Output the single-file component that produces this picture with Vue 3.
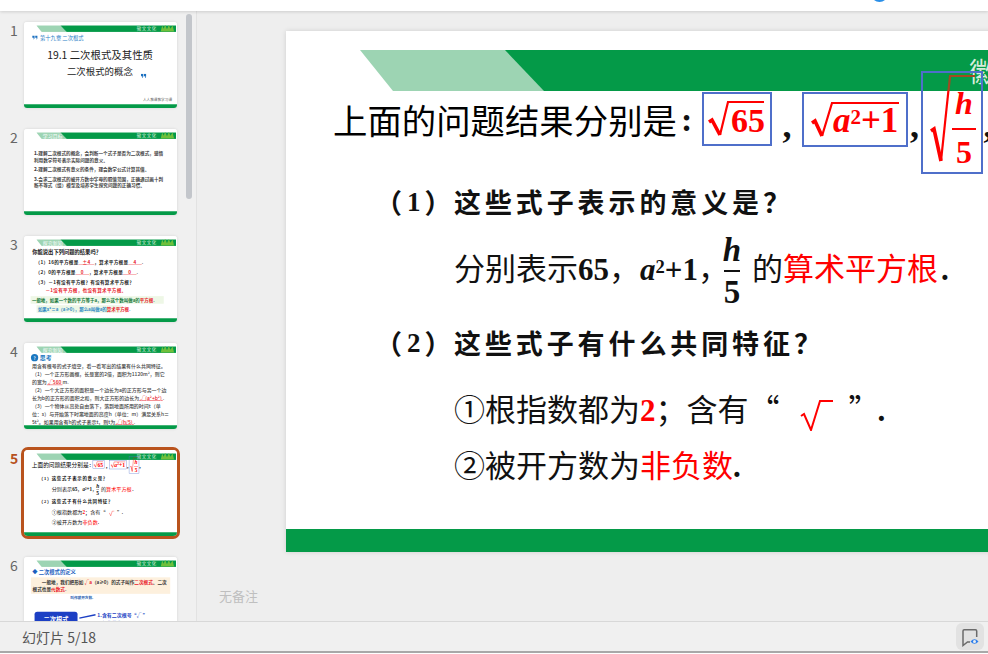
<script setup>
const line2 = [
  { n: 1, t: '理解二次根式的概念，会判断一个式子是否为二次根式，感悟利用数学符号表示实际问题的意义。' },
  { n: 2, t: '理解二次根式有意义的条件，理会数学公式计算其值。' },
  { n: 3, t: '会求二次根式的被开方数中字母的取值范围，正确通过画十判断不等式（组）模型及培养学生探究问题的正确习惯。' }
]
const line4 = [
  '用含有根号的式子填空，看一看写出的结果有什么共同特征。',
  '（1）一个正方形画框，长是宽的2倍，面积为1120m²，则它的宽为',
  '（2）一个大正方形的面积是一个边长为a的正方形与另一个边长为b的正方形的面积之和，则大正方形的边长为',
  '（3）一个物体从高处自由落下，落到地面所用的时间t（单位：s）与开始落下时离地面的高度h（单位：m）满足关系h＝5t²。如果用含有h的式子表示t，则t为'
]
</script>

<template>
  <div class="app">
    <header class="top"><i class="blue-dot"></i></header>
    <div class="body">
      <aside class="side">
        <div class="scroll-thumb"></div>

        <div class="row">
          <span class="num">1</span>
          <div class="frame">
            <div class="slide mini">
              <div class="banner"><div class="light"></div><div class="dark"><span>徽文文化</span></div></div>
              <svg class="logo" viewBox="0 0 100 50"><path d="M5 48 L15 8 L25 30 L35 2 L47 32 L60 4 L70 30 L85 8 L95 48 Z" fill="#6fbf3b"/></svg>
              <div class="s1">
                <div class="chap"><svg class="qm" viewBox="0 0 34 26"><path d="M1 0 H15 V14 Q15 22 8 26 Q10 20 9 14 H1 Z M19 0 H33 V14 Q33 22 26 26 Q28 20 27 14 H19 Z" fill="#1c70c0"/></svg>第十九章 二次根式</div>
                <div class="t1">19.1 二次根式及其性质</div>
                <div class="t2">二次根式的概念<svg class="qm q-end" viewBox="0 0 34 26"><path d="M1 0 H15 V14 Q15 22 8 26 Q10 20 9 14 H1 Z M19 0 H33 V14 Q33 22 26 26 Q28 20 27 14 H19 Z" fill="#1c70c0"/></svg></div>
              </div>
              <div class="foot-note">人人教课教学习课</div>
              <div class="footer"></div>
            </div>
          </div>
        </div>

        <div class="row">
          <span class="num">2</span>
          <div class="frame">
            <div class="slide mini">
              <div class="banner"><div class="light"><span>学习目标</span></div><div class="dark"><span>徽文文化</span></div></div>
              <svg class="logo" viewBox="0 0 100 50"><path d="M5 48 L15 8 L25 30 L35 2 L47 32 L60 4 L70 30 L85 8 L95 48 Z" fill="#6fbf3b"/></svg>
              <div class="s2">
                <p v-for="l in line2" :key="l.n"><b>{{ l.n }}.</b>{{ l.t }}</p>
              </div>
              <div class="footer"></div>
            </div>
          </div>
        </div>

        <div class="row">
          <span class="num">3</span>
          <div class="frame">
            <div class="slide mini">
              <div class="banner"><div class="light"><span>探究新知</span></div><div class="dark"><span>徽文文化</span></div></div>
              <svg class="logo" viewBox="0 0 100 50"><path d="M5 48 L15 8 L25 30 L35 2 L47 32 L60 4 L70 30 L85 8 L95 48 Z" fill="#6fbf3b"/></svg>
              <div class="s3">
                <div class="h3t">你能说出下列问题的结果吗？</div>
                <div class="q">（1）16的平方根是<u class="r">&nbsp;&nbsp;&nbsp;±4&nbsp;&nbsp;&nbsp;</u>，算术平方根是<u class="r">&nbsp;&nbsp;&nbsp;&nbsp;4&nbsp;&nbsp;&nbsp;&nbsp;</u>.</div>
                <div class="q">（2）0的平方根是<u class="r">&nbsp;&nbsp;&nbsp;&nbsp;0&nbsp;&nbsp;&nbsp;&nbsp;</u>，算术平方根是<u class="r">&nbsp;&nbsp;&nbsp;&nbsp;0&nbsp;&nbsp;&nbsp;&nbsp;</u>.</div>
                <div class="q">（3）－1有没有平方根？有没有算术平方根？</div>
                <div class="q red-line">－1没有平方根，也没有算术平方根。</div>
                <div class="pale">一般地，如果一个数的平方等于a，那么这个数叫做a的<em>平方根</em>.</div>
                <div class="pale blue-t">如果x²＝a（a≥0），那么a叫做a的<em>算术平方根</em>.</div>
              </div>
              <div class="footer"></div>
            </div>
          </div>
        </div>

        <div class="row">
          <span class="num">4</span>
          <div class="frame">
            <div class="slide mini">
              <div class="banner"><div class="light"><span>探究新知</span></div><div class="dark"><span>徽文文化</span></div></div>
              <svg class="logo" viewBox="0 0 100 50"><path d="M5 48 L15 8 L25 30 L35 2 L47 32 L60 4 L70 30 L85 8 L95 48 Z" fill="#6fbf3b"/></svg>
              <div class="s4">
                <div class="think"><i class="think-dot">?</i>思考</div>
                <p>{{ line4[0] }}</p>
                <p>{{ line4[1] }}<u class="r">&nbsp;√560&nbsp;</u>m.</p>
                <p>{{ line4[2] }}<u class="r">&nbsp;√(a²+b²)&nbsp;</u>.</p>
                <p>{{ line4[3] }}<u class="r">&nbsp;√(h/5)&nbsp;</u>.</p>
              </div>
              <div class="footer"></div>
            </div>
          </div>
        </div>

        <div class="row">
          <span class="num active">5</span>
          <div class="frame on">
            <div class="slide mini">
              <div class="banner"><div class="light"></div><div class="dark"><span>徽文文化</span></div></div>
              <svg class="logo" viewBox="0 0 100 50"><path d="M5 48 L15 8 L25 30 L35 2 L47 32 L60 4 L70 30 L85 8 L95 48 Z" fill="#6fbf3b"/></svg>
              <div class="s5">
                <div class="title-row">
                  <span class="ttl">上面的问题结果分别是</span><span class="colon">:</span>
                  <div class="box b1">
                    <svg class="m" width="70" height="54" viewBox="0 0 70 54"><path class="rad-t" d="M7 30 L10 28 L18 43"/><path class="rad" d="M18 43 L26 10 L62 10"/></svg>
                    <span class="mth m1">65</span>
                  </div>
                  <span class="comma c1">,</span>
                  <div class="box b2">
                    <svg class="m" width="106" height="55" viewBox="0 0 106 55"><path class="rad-t" d="M10 31 L13 29 L20 44"/><path class="rad" d="M20 44 L30 11 L97 11"/></svg>
                    <span class="mth m2"><i>a</i><sup>2</sup>+1</span>
                  </div>
                  <span class="comma c2">,</span>
                  <div class="box b3">
                    <svg class="m" width="62" height="103" viewBox="0 0 62 103"><path class="rad-t" d="M10 60 L13 58 L20 90"/><path class="rad" d="M20 90 L27.5 19"/><path class="rad-top" d="M27.5 20 L29 5 L54 5"/></svg>
                    <span class="frac mth"><i>h</i><span class="bar"></span><span>5</span></span>
                  </div>
                  <span class="comma c3">,</span>
                </div>
                <div class="q1"><span class="pn">（<b>1</b>）</span>这些式子表示的意义是？</div>
                <div class="l2">分别表示<b class="sf">65</b>，<b class="sf"><i>a</i><sup>2</sup>+1</b>，<span class="frac mth inl"><i>h</i><span class="bar k"></span><span>5</span></span>的<span class="red">算术平方根</span><b class="sf dot">.</b></div>
                <div class="q1 q2"><span class="pn">（<b>2</b>）</span>这些式子有什么共同特征？</div>
                <div class="l3">①根指数都为<b class="sf red">2</b>；含有“<svg class="mini-rad" width="36" height="36" viewBox="0 0 36 36"><path d="M2 21 L5 19 L12 35 L21 6 L34 6" fill="none" stroke="#f00" stroke-width="2"/></svg>”<b class="sf dot">.</b></div>
                <div class="l4">②被开方数为<span class="red">非负数</span><b class="sf dot">.</b></div>
              </div>
              <div class="footer"></div>
            </div>
          </div>
        </div>

        <div class="row">
          <span class="num">6</span>
          <div class="frame">
            <div class="slide mini">
              <div class="banner"><div class="light"></div><div class="dark"><span>徽文文化</span></div></div>
              <svg class="logo" viewBox="0 0 100 50"><path d="M5 48 L15 8 L25 30 L35 2 L47 32 L60 4 L70 30 L85 8 L95 48 Z" fill="#6fbf3b"/></svg>
              <div class="s6">
                <div class="h6">◆ 二次根式的定义</div>
                <div class="note6">　　一般地，我们把形如 <span class="r">√a</span>（a≥0）的式子叫作<em>二次根式</em>。二次根式也是<em>代数式</em>.</div>
                <div class="sub6">叫作被开方数.</div>
                <div class="bottom6">
                  <div class="btn6">二次根式</div>
                  <div class="arrow6"></div>
                  <div class="side6">1.含有二次根号“√ ”<br />（根指数为2）.</div>
                </div>
              </div>
              <div class="footer"></div>
            </div>
          </div>
        </div>
      </aside>

      <main class="main">
        <div class="slide big">
          <div class="banner"><div class="light"></div><div class="dark"><span>徽文文化</span></div></div>
          <svg class="logo" viewBox="0 0 100 50"><path d="M5 48 L15 8 L25 30 L35 2 L47 32 L60 4 L70 30 L85 8 L95 48 Z" fill="#6fbf3b"/></svg>
          <div class="s5">
            <div class="title-row">
              <span class="ttl">上面的问题结果分别是</span><span class="colon">:</span>
              <div class="box b1">
                <svg class="m" width="70" height="54" viewBox="0 0 70 54"><path class="rad-t" d="M7 30 L10 28 L18 43"/><path class="rad" d="M18 43 L26 10 L62 10"/></svg>
                <span class="mth m1">65</span>
              </div>
              <span class="comma c1">,</span>
              <div class="box b2">
                <svg class="m" width="106" height="55" viewBox="0 0 106 55"><path class="rad-t" d="M10 31 L13 29 L20 44"/><path class="rad" d="M20 44 L30 11 L97 11"/></svg>
                <span class="mth m2"><i>a</i><sup>2</sup>+1</span>
              </div>
              <span class="comma c2">,</span>
              <div class="box b3">
                <svg class="m" width="62" height="103" viewBox="0 0 62 103"><path class="rad-t" d="M10 60 L13 58 L20 90"/><path class="rad" d="M20 90 L27.5 19"/><path class="rad-top" d="M27.5 20 L29 5 L54 5"/></svg>
                <span class="frac mth"><i>h</i><span class="bar"></span><span>5</span></span>
              </div>
              <span class="comma c3">,</span>
            </div>
            <div class="q1"><span class="pn">（<b>1</b>）</span>这些式子表示的意义是？</div>
            <div class="l2">分别表示<b class="sf">65</b>，<b class="sf"><i>a</i><sup>2</sup>+1</b>，<span class="frac mth inl"><i>h</i><span class="bar k"></span><span>5</span></span>的<span class="red">算术平方根</span><b class="sf dot">.</b></div>
            <div class="q1 q2"><span class="pn">（<b>2</b>）</span>这些式子有什么共同特征？</div>
            <div class="l3">①根指数都为<b class="sf red">2</b>；含有“<svg class="mini-rad" width="36" height="36" viewBox="0 0 36 36"><path d="M2 21 L5 19 L12 35 L21 6 L34 6" fill="none" stroke="#f00" stroke-width="2"/></svg>”<b class="sf dot">.</b></div>
            <div class="l4">②被开方数为<span class="red">非负数</span><b class="sf dot">.</b></div>
          </div>
          <div class="footer"></div>
        </div>
        <div class="notes">无备注</div>
      </main>
    </div>
    <footer class="status">
      <span>幻灯片 5/18</span>
      <button class="view-btn" aria-label="view">
        <svg width="20" height="20" viewBox="0 0 20 20">
          <path d="M10 15 H7.5 L3 18.5 V4 a1.2 1.2 0 0 1 1.2-1.2 H15.5 a1.2 1.2 0 0 1 1.2 1.2 V10" fill="none" stroke="#6b6b6b" stroke-width="1.5"/>
          <path d="M10.5 14.5 Q14.5 10 18.5 14.5 Q14.5 19 10.5 14.5 Z" fill="#2f80ed"/>
          <circle cx="14.5" cy="14.5" r="1.5" fill="#eee"/>
        </svg>
      </button>
    </footer>
  </div>
</template>

<style>
html, body { margin: 0; background: #fff; overflow: hidden; }
</style>

<style scoped>
.app { width: 988px; height: 653px; display: flex; flex-direction: column; overflow: hidden; background: #f0f0f0; font-family: "Noto Sans CJK SC", "Noto Sans", sans-serif; position: relative; }
.top { height: 11px; background: #fff; box-shadow: 0 1px 3px rgba(0,0,0,.14); position: relative; overflow: hidden; z-index: 2; flex: none; }
.blue-dot { position: absolute; left: 871px; top: -15px; width: 17px; height: 17px; border-radius: 50%; background: #2a8fe8; }
.body { flex: 1; display: flex; min-height: 0; }
.side { width: 196px; flex: none; border-right: 1px solid #e2e2e2; padding-top: 11px; position: relative; overflow: hidden; display: flex; flex-direction: column; gap: 21px; box-sizing: content-box; }
.scroll-thumb { position: absolute; left: 186px; top: 3px; width: 6px; height: 185px; border-radius: 3px; background: #c3c6cb; }
.row { display: flex; flex: none; height: 86px; position: relative; }
.num { width: 24px; flex: none; padding: 0 0 0 10px; box-sizing: border-box; font-size: 14px; line-height: 16px; color: #666; }
.num.active { color: #b7501d; font-weight: 700; }
.frame { width: 153px; height: 86px; overflow: hidden; border-radius: 3px; box-shadow: 0 0 3px rgba(0,0,0,.12); background: #fff; flex: none; }
.frame.on { outline: 3px solid #b9531d; outline-offset: 0; border-radius: 4px; }
.slide { width: 926px; height: 521px; background: #fff; position: relative; flex: none; overflow: hidden; }
.mini { transform: scale(.1652); transform-origin: 0 0; }
.big { box-shadow: 0 0 5px rgba(0,0,0,.13); overflow: visible; }
.banner { position: absolute; left: 74px; top: 19px; width: 847px; height: 41px; }
.light { position: absolute; left: 0; top: 0; width: 185px; height: 41px; background: #9dd4b3; clip-path: polygon(0 0, 146px 0, 185px 41px, 33px 41px); }
.light span { position: absolute; left: 40px; top: 2px; color: #fff; font-size: 30px; line-height: 36px; }
.dark { position: absolute; left: 145px; right: 0; top: 0; height: 41px; background: #049a48; clip-path: polygon(0 0, 100% 0, 100% 100%, 39px 100%); }
.dark span { position: absolute; left: 464px; top: 3px; color: #d6ecdc; font-size: 27px; line-height: 36px; letter-spacing: 3px; white-space: nowrap; }
.logo { position: absolute; left: 823px; top: 14px; width: 90px; height: 46px; }
.footer { position: absolute; left: 0; right: 0; bottom: 0; height: 23px; background: #049a48; }
.foot-note { position: absolute; right: 30px; bottom: 34px; font-size: 22px; color: #666; }

.s5 { padding: 40px 0 0 47px; color: #111; white-space: nowrap; position: relative; }
.title-row { display: flex; align-items: center; height: 103px; position: relative; }
.ttl { font-size: 34.4px; line-height: 46px; margin-top: -7px; color: #000; }
.colon { width: 25px; flex: none; font-size: 34px; font-weight: 700; font-family: "Liberation Serif", serif; text-align: left; padding-left: 4px; box-sizing: border-box; margin-top: -5px; }
.box { border: 2px solid #4f6fca; box-sizing: border-box; position: relative; flex: none; color: #f00; }
.b1 { width: 70px; height: 54px; margin-top: -7px; }
.b2 { width: 106px; height: 55px; margin-top: -6px; }
.b3 { width: 62px; height: 103px; }
.m { position: absolute; left: -2px; top: -2px; }
.rad, .rad-t, .rad-top { fill: none; stroke: #f00; stroke-width: 2.2px; }
.rad-t { stroke-width: 3.6px; }
.rad-top { stroke: #a14a22; stroke-width: 2.2px; }
.mth { font-family: "Liberation Serif", serif; font-weight: 700; }
.m1, .m2 { position: absolute; top: 7px; font-size: 34px; line-height: 40px; }
.m1 { left: 27px; }
.m2 { left: 29px; font-size: 35px; }
.m2 sup, .sf sup { font-size: .6em; line-height: 0; vertical-align: baseline; position: relative; top: -.38em; }
.comma { font-family: "Liberation Serif", serif; font-weight: 700; font-size: 36px; flex: none; text-align: center; margin-top: 4px; }
.c1 { width: 30px; }
.c2 { width: 13px; }
.c3 { width: 10px; }
.frac { display: inline-flex; flex-direction: column; align-items: center; color: #f00; }
.b3 .frac { position: absolute; left: 29px; top: 13px; font-size: 32px; line-height: 34px; width: 24px; }
.bar { display: block; width: 100%; height: 2px; background: currentColor; margin: 8px 0 5px; flex: none; }
.q1 { margin: 8px 0 0 42px; height: 40px; line-height: 40px; font-size: 27px; font-weight: 700; letter-spacing: 3.9px; display: flex; }
.pn { display: inline-flex; width: 79px; flex: none; letter-spacing: 0; }
.pn b { font-family: "Liberation Serif", serif; margin: 0 4px 0 5px; }
.q2 { margin-top: 18px; }
.l2 { margin: 7px 0 0 121px; height: 76px; line-height: 76px; font-size: 31px; }
.sf { font-family: "Liberation Serif", serif; font-weight: 700; }
.inl { color: #111; font-size: 33px; line-height: 33px; width: 16px; margin: 0 12px 0 -5px; vertical-align: middle; }
.bar.k { margin: 3px 0 4px; width: 16px; flex: none; }
.red { color: #f00; }
.dot { margin-left: 3px; }
.l3, .l4 { margin-left: 121px; height: 44px; line-height: 44px; font-size: 31px; }
.l3 { margin-top: 23px; }
.l3 .dot { margin-left: -2px; }
.l4 { margin-top: 12px; }
.l4 .dot { margin-left: 0; }
.mini-rad { margin: 0 14px 0 19px; vertical-align: middle; }

.s1 { padding: 75px 0 0 109px; }
.chap { color: #2c7fc7; font-size: 32px; line-height: 40px; margin-left: -60px; display: flex; align-items: center; gap: 14px; }
.qm { width: 34px; height: 26px; flex: none; }
.q-end { margin-left: 48px; vertical-align: -18px; }
.t1 { font-size: 63px; line-height: 80px; margin: 40px 0 0 31px; color: #222; white-space: nowrap; }
.t2 { font-size: 57px; line-height: 80px; margin: 22px 0 0 151px; color: #222; white-space: nowrap; }
.s2 { padding: 125px 60px 0 60px; font-size: 28px; line-height: 42px; font-weight: 700; color: #444; }
.s2 p, .s4 p { margin: 0 0 14px; }
.s3 { padding: 74px 50px 0 50px; font-size: 28px; font-weight: 700; color: #222; white-space: nowrap; }
.h3t { font-size: 32px; line-height: 46px; font-weight: 700; color: #111; }
.q { margin: 14px 0 0 20px; line-height: 46px; letter-spacing: 1.5px; }
.r { color: #e8202a; }
.red-line { color: #e8202a; margin: 2px 0 0 80px; }
.pale { background: #eef7e6; margin: 16px 0 0 -10px; padding: 5px 8px 5px 8px; line-height: 36px; width: 790px; font-size: 27px; color: #14783a; }
.pale em, .note6 em { font-style: normal; color: #e8202a; }
.blue-t { color: #2c88c4; width: 500px; margin: 9px 0 0 26px; }
.s4 { padding: 65px 46px 0 48px; font-size: 30px; line-height: 48px; color: #444; font-weight: 500; }
.s4 p { margin: 0; }
.think { display: flex; align-items: center; gap: 10px; color: #1b77c0; font-size: 36px; line-height: 48px; font-weight: 700; margin: 0 0 4px -6px; }
.think-dot { width: 44px; height: 44px; border-radius: 50%; background: #1b77c0; color: #fff; font-style: normal; font-size: 26px; text-align: center; line-height: 44px; }
.s6 { padding: 65px 0 0 50px; font-size: 28px; color: #333; font-weight: 700; }
.h6 { color: #1c5fc0; font-size: 32px; line-height: 44px; }
.note6 { background: #fdf0dd; margin: 14px 41px 0 -8px; padding: 8px 10px; line-height: 42px; }
.sub6 { margin: 6px 0 0 230px; font-size: 22px; color: #2a5fb0; }
.bottom6 { display: flex; align-items: flex-start; margin-top: 70px; }
.btn6 { width: 260px; height: 90px; background: #1c3fc4; border-radius: 16px; color: #fff; font-size: 38px; line-height: 90px; text-align: center; margin-left: 14px; }
.arrow6 { width: 100px; height: 8px; background: #1c3fc4; margin: 25px 10px 0; transform: rotate(-12deg); }
.side6 { color: #1c3fc4; font-size: 30px; line-height: 44px; }

.main { flex: 1; min-width: 0; padding: 20px 0 0 89px; overflow: hidden; background: #eeeeee; }
.notes { margin: 34px 0 0 -67px; font-size: 13px; line-height: 20px; color: #bfbfbf; }
.status { height: 29px; flex: none; border-top: 1px solid #d8d8d8; border-bottom: 2px solid #a8a8a8; display: flex; align-items: center; justify-content: space-between; padding: 0 4px 0 22px; font-size: 14px; color: #555; background: #f0f0f0; }
.view-btn { width: 28px; height: 27px; border: 0; padding: 0; border-radius: 6px; background: #e2e2e2; display: flex; align-items: center; justify-content: center; }
</style>
